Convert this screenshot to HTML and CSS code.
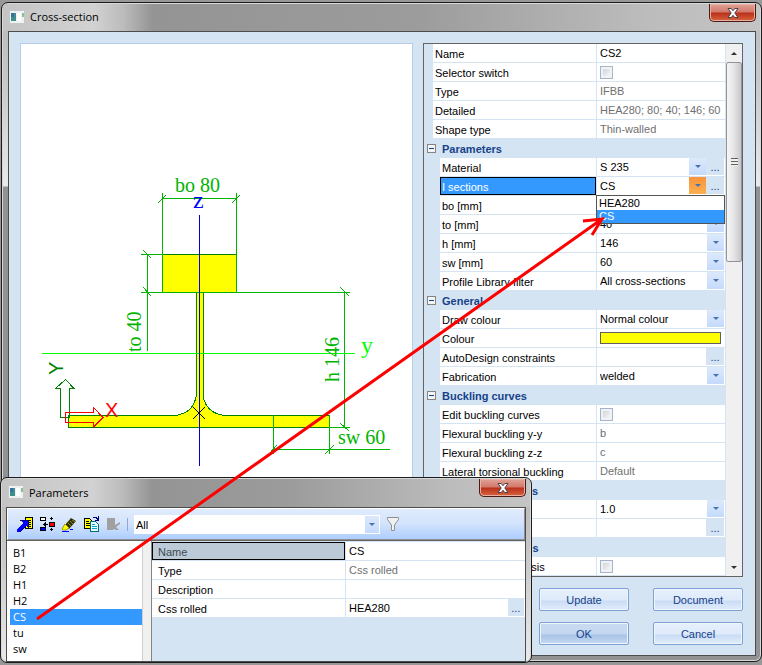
FILE: index.html
```html
<!DOCTYPE html>
<html lang="en">
<head>
    <meta charset="UTF-8">
    <meta name="viewport" content="width=device-width, initial-scale=1.0">
    <title>Cross-section</title>
    <link rel="stylesheet" href="styles.css">
</head>
<body>

    <main class="window main-window">
        <header class="title-bar">
            <svg class="app-icon" viewBox="0 0 16 14" width="16" height="14">
                <rect x="0.5" y="0.5" width="15" height="13" fill="#eef2f2" stroke="#c4c8c8"/>
                <rect x="2" y="3" width="5" height="8" fill="#3f8f8a"/>
                <rect x="2" y="3" width="3" height="4" fill="#3a6ea5"/>
                <rect x="8" y="3" width="4" height="8" fill="#fff"/>
                <rect x="13" y="3" width="2" height="4" fill="#8cc08c"/>
            </svg>
            <h1>Cross-section</h1>
            <button class="close" type="button" aria-label="Close">
                <svg viewBox="0 0 12 10" width="12" height="10"><path d="M1 .5h3.2L6 2.700 7.800.5H11L7.800 5 11 9.500H7.800L6 7.300 4.200 9.500H1L4.200 5z" fill="#fff" stroke="#4c3f4a"/></svg>
            </button>
        </header>

        <div class="client">
            <section class="preview">
                <svg viewBox="21 44 391 532">
                    <!-- steel profile -->
                    <g fill="#ffff00" stroke="#008000" shape-rendering="crispEdges">
                        <rect x="162.500" y="254.500" width="74" height="38"/>
                        <path d="M68.500 427.500V415.500H175C187 414 195 408 196.500 394V292.500H203.500V398C206 408 214 414 224 415.500H329.500V427.500z"/>
                    </g>
                    <!-- dimension lines -->
                    <g fill="none" stroke="#00b400" shape-rendering="crispEdges">
                        <path d="M162.500 193V292M236.500 193V292M162 198.500H237M158 203l8-8M232 203l8-8"/>
                        <path d="M141 254.500H163M141 292.500H350M147.500 254V351M143 250l8 8M143 287l8 9"/>
                        <path d="M344.500 292V428M329 427.500H350M340 287l9 9M340 423l9 8"/>
                        <path d="M273.500 415V454M329.500 415V454M273 449.500H390M269 454l8-9M325 454l9-9"/>
                        <path d="M42 353.500H355" stroke="#00ff00"/>
                    </g>
                    <!-- axes -->
                    <path d="M199.500 215V466" stroke="#0000d0" shape-rendering="crispEdges"/>
                    <path d="M193 407l12 12M205 407l-12 12" stroke="#000"/>
                    <path d="M60.500 417.500V388.500H55.500L65.500 379.500L74 388.500H69.500V417.500z" fill="none" stroke="#008000" shape-rendering="crispEdges"/>
                    <path d="M65.500 412.500H93.500V407.500L103 417.500L93.500 427V422.500H65.500z" fill="none" stroke="#ff0000" shape-rendering="crispEdges"/>
                    <g class="dim" fill="#00b400">
                        <text x="175" y="192">bo 80</text>
                        <text transform="translate(141 352) rotate(-90)">to 40</text>
                        <text transform="translate(339 382) rotate(-90)">h 146</text>
                        <text x="338" y="444">sw 60</text>
                    </g>
                    <text class="axis" x="193" y="208" fill="#0000ff">z</text>
                    <text class="axis" x="361" y="353" fill="#00ff00">y</text>
                    <text class="origin" x="105" y="417" fill="#ff0000">X</text>
                    <text class="origin" transform="translate(63 375) rotate(-90)" fill="#008000">Y</text>
                </svg>
            </section>

            <div class="side">
                <section class="properties">
                    <table class="grid">
                        <tbody class="top">
                            <tr><th><label for="name">Name</label></th><td><input type="text" id="name" value="CS2"></td></tr>
                            <tr><th><label for="selector">Selector switch</label></th><td><input type="checkbox" id="selector"></td></tr>
                            <tr><th>Type</th><td class="readonly">IFBB</td></tr>
                            <tr><th>Detailed</th><td class="readonly">HEA280; 80; 40; 146; 60</td></tr>
                            <tr><th>Shape type</th><td class="readonly">Thin-walled</td></tr>
                        </tbody>
                        <tbody>
                            <tr class="group"><th colspan="2"><div class="group-title"><button type="button" class="toggle" aria-label="Collapse Parameters"></button>Parameters</div></th></tr>
                            <tr><th><label for="material">Material</label></th><td><div class="field"><select id="material"><option>S 235</option></select><span class="arrow"></span><button type="button" class="more">...</button></div></td></tr>
                            <tr><th class="selected"><label for="isections">I sections</label></th>
                                <td class="open">
                                    <div class="field"><select id="isections"><option>CS</option><option>HEA280</option></select><span class="arrow hot"></span><button type="button" class="more">...</button></div>
                                    <ul class="options" role="listbox">
                                        <li role="option">HEA280</li>
                                        <li role="option" class="current" aria-selected="true">CS</li>
                                    </ul>
                                </td></tr>
                            <tr><th><label for="bo">bo [mm]</label></th><td><div class="field"><select id="bo"><option>80</option></select><span class="arrow"></span></div></td></tr>
                            <tr><th><label for="to">to [mm]</label></th><td><div class="field"><select id="to"><option>40</option></select><span class="arrow"></span></div></td></tr>
                            <tr><th><label for="h">h [mm]</label></th><td><div class="field"><select id="h"><option>146</option></select><span class="arrow"></span></div></td></tr>
                            <tr><th><label for="sw">sw [mm]</label></th><td><div class="field"><select id="sw"><option>60</option></select><span class="arrow"></span></div></td></tr>
                            <tr><th><label for="filter">Profile Library filter</label></th><td><div class="field"><select id="filter"><option>All cross-sections</option></select><span class="arrow"></span></div></td></tr>
                        </tbody>
                        <tbody>
                            <tr class="group"><th colspan="2"><div class="group-title"><button type="button" class="toggle" aria-label="Collapse General"></button>General</div></th></tr>
                            <tr><th><label for="draw">Draw colour</label></th><td><div class="field"><select id="draw"><option>Normal colour</option></select><span class="arrow"></span></div></td></tr>
                            <tr><th>Colour</th><td><button type="button" class="swatch" aria-label="Colour"></button></td></tr>
                            <tr><th>AutoDesign constraints</th><td><div class="field end"><button type="button" class="more">...</button></div></td></tr>
                            <tr><th><label for="fabrication">Fabrication</label></th><td><div class="field"><select id="fabrication"><option>welded</option></select><span class="arrow"></span></div></td></tr>
                        </tbody>
                        <tbody>
                            <tr class="group"><th colspan="2"><div class="group-title"><button type="button" class="toggle" aria-label="Collapse Buckling curves"></button>Buckling curves</div></th></tr>
                            <tr><th><label for="edit">Edit buckling curves</label></th><td><input type="checkbox" id="edit"></td></tr>
                            <tr><th>Flexural buckling y-y</th><td class="readonly">b</td></tr>
                            <tr><th>Flexural buckling z-z</th><td class="readonly">c</td></tr>
                            <tr><th>Lateral torsional buckling</th><td class="readonly">Default</td></tr>
                        </tbody>
                        <tbody>
                            <tr class="group"><th colspan="2"><div class="group-title"><button type="button" class="toggle" aria-label="Collapse Stress parameters"></button>Stress parameters</div></th></tr>
                            <tr><th><label for="factor">Factor</label></th><td><div class="field"><select id="factor"><option>1.0</option></select><span class="arrow"></span></div></td></tr>
                            <tr><th>Details</th><td><div class="field end"><button type="button" class="more">...</button></div></td></tr>
                        </tbody>
                        <tbody>
                            <tr class="group"><th colspan="2"><div class="group-title"><button type="button" class="toggle" aria-label="Collapse Section properties"></button>Section properties</div></th></tr>
                            <tr><th><label for="fem">For 2D FEM analysis</label></th><td><input type="checkbox" id="fem"></td></tr>
                        </tbody>
                    </table>
                    <div class="scrollbar">
                        <button type="button" class="scroll-up" aria-label="Scroll up"></button>
                        <div class="thumb"><span></span></div>
                        <button type="button" class="scroll-down" aria-label="Scroll down"></button>
                    </div>
                </section>

                <div class="actions">
                    <button type="button">Update</button>
                    <button type="button">Document</button>
                    <button type="button" class="default">OK</button>
                    <button type="button">Cancel</button>
                </div>
            </div>
        </div>
    </main>

    <section class="window params-window">
        <header class="title-bar">
            <svg class="app-icon" viewBox="0 0 16 14" width="16" height="14">
                <rect x="0.5" y="0.5" width="15" height="13" fill="#eef2f2" stroke="#c4c8c8"/>
                <rect x="2" y="3" width="5" height="8" fill="#3f8f8a"/>
                <rect x="2" y="3" width="3" height="4" fill="#3a6ea5"/>
                <rect x="8" y="3" width="4" height="8" fill="#fff"/>
                <rect x="13" y="3" width="2" height="4" fill="#8cc08c"/>
            </svg>
            <h2>Parameters</h2>
            <button class="close" type="button" aria-label="Close">
                <svg viewBox="0 0 12 10" width="12" height="10"><path d="M1 .5h3.2L6 2.700 7.800.5H11L7.800 5 11 9.500H7.800L6 7.300 4.200 9.500H1L4.200 5z" fill="#fff" stroke="#4c3f4a"/></svg>
            </button>
        </header>

        <div class="params-client">
            <div class="toolbar">
                <button type="button" aria-label="New">
                    <svg viewBox="0 0 16 16" width="16" height="16" shape-rendering="crispEdges">
                        <rect x="8.500" y="1.500" width="7" height="11" fill="#ffff00" stroke="#000"/>
                        <path d="M11 4.500h3M11 6.500h3M11 8.500h3M11 10.500h3" stroke="#000"/>
                        <path d="M3 4h8v8l-2-2-6 6H0v-3l6-6z" fill="#0000ff"/>
                        <path d="M3 4.500h8M11 4v8M9 10l-6 6" stroke="#000080" fill="none"/>
                    </svg>
                </button>
                <button type="button" aria-label="Insert">
                    <svg viewBox="0 0 16 16" width="16" height="16" shape-rendering="crispEdges">
                        <rect x="1.500" y="1.500" width="5" height="3" fill="#fff" stroke="#000"/>
                        <rect x="1.500" y="11.500" width="5" height="3" fill="#0000ff" stroke="#000"/>
                        <rect x="10.500" y="6.500" width="5" height="4" fill="#ff0000" stroke="#000"/>
                        <path d="M4 8.500h5M5 7v3M6 6v5M11 2.500h3M12.500 1v3M11 13.500h3M12.500 12v3" stroke="#000"/>
                    </svg>
                </button>
                <button type="button" aria-label="Edit">
                    <svg viewBox="0 0 16 16" width="16" height="16">
                        <path d="M10 2l5 3-7 8-4-4z" fill="#303000"/>
                        <path d="M9 5l3 3M7 7l3 3M11 4l3 2" stroke="#8c8c20"/>
                        <path d="M4 8l4 4-3 2H2l-1-1z" fill="#ffff00" stroke="#a0a000"/>
                        <path d="M1 15.500h7M9 13.500h3" stroke="#0000ff"/>
                    </svg>
                </button>
                <button type="button" aria-label="Copy">
                    <svg viewBox="0 0 16 16" width="16" height="16" shape-rendering="crispEdges">
                        <path d="M1.500 2.500h5l3 3v7h-8z" fill="#ffff00" stroke="#000"/>
                        <path d="M3 5.500h3M3 7.500h4M3 9.500h4" stroke="#000"/>
                        <path d="M7.500 5.500h5l3 3v7h-8z" fill="#e8ffff" stroke="#007070"/>
                        <path d="M9 8.500h3M9 10.500h5M9 12.500h5" stroke="#00a0d0"/>
                        <path d="M10 1.500h3l2 2M15.500 0v4h-4" fill="none" stroke="#000080"/>
                    </svg>
                </button>
                <button type="button" aria-label="Delete" disabled>
                    <svg viewBox="0 0 16 16" width="16" height="16">
                        <path d="M2 2h8v7l5-3v2l-4 3 3 3h-3l-2-1-1 1H2z" fill="#a0a0a0"/>
                    </svg>
                </button>
                <span class="separator"></span>
                <div class="field all">
                    <select aria-label="Show"><option>All</option></select><span class="arrow"></span>
                </div>
                <button type="button" class="funnel" aria-label="Filter">
                    <svg viewBox="0 0 14 16" width="14" height="16"><path d="M1.500 1.500h11v2L8.500 9v5.500h-3V9l-4-5.500z" fill="#eef0f2" stroke="#909090"/></svg>
                </button>
            </div>

            <div class="params-body">
                <ul class="items">
                    <li>B1</li>
                    <li>B2</li>
                    <li>H1</li>
                    <li>H2</li>
                    <li class="current">CS</li>
                    <li>tu</li>
                    <li>sw</li>
                </ul>
                <div class="item-detail">
                    <table class="grid">
                        <tbody>
                            <tr><th class="focused"><label for="item-name">Name</label></th><td><input type="text" id="item-name" value="CS"></td></tr>
                            <tr><th>Type</th><td class="readonly">Css rolled</td></tr>
                            <tr><th><label for="item-desc">Description</label></th><td><input type="text" id="item-desc"></td></tr>
                            <tr><th><label for="item-css">Css rolled</label></th><td><div class="field"><input type="text" id="item-css" value="HEA280"><button type="button" class="more">...</button></div></td></tr>
                        </tbody>
                    </table>
                </div>
            </div>
        </div>
    </section>

    <!-- arrow from the list item to the drop-down option -->
    <svg class="callout" viewBox="0 0 762 665" width="762" height="665">
        <path d="M37 619L602 219M583 221L602 219L592 235" fill="none" stroke="#ff0000" stroke-width="3"/>
    </svg>

</body>
</html>
```

FILE: styles.css
```css
* {
    box-sizing: border-box;
}
body {
    position: relative;
    margin: 0;
    padding: 2px 0 2px 1px;
    min-height: 100vh;
    background-color: #989898;
    font-family: "Liberation Sans", Arial, sans-serif;
    font-size: 11px;
    color: #000;
}
button, input, select {
    font: inherit;
    color: inherit;
    margin: 0;
    padding: 0;
    border: none;
    border-radius: 0;
    background: none;
}
ul {
    list-style: none;
    margin: 0;
    padding: 0;
}

/* Windows */
.window {
    border: 1px solid #1c1c1c;
    border-radius: 7px;
    background: linear-gradient(#b8b8b8, #c8c8c8 80px, #eaeaea 183px, #929292 184px);
    box-shadow: inset 0 0 0 1px #d8d8d8;
}
.main-window {
    padding: 0 5px 5px 6px;
}
.title-bar {
    display: flex;
    align-items: center;
    height: 27px;
    margin: 1px -4px 0 -5px;
    padding: 0 4px 2px 6px;
    border-radius: 6px 6px 0 0;
    background: linear-gradient(90deg, #c4c4c4, #d2d2d2 90px, #bcbcbc 120px, #949494 150px, #9c9c9c 55%, #bcbcbc 85%, #c4c4c4);
}
.title-bar h1, .title-bar h2 {
    flex: 1;
    margin: 0 0 0 5px;
    font-family: "Open Sans", sans-serif;
    font-size: 11px;
    font-weight: normal;
}
.close {
    display: flex;
    align-items: center;
    justify-content: center;
    align-self: flex-start;
    width: 47px;
    height: 18px;
    border: 1px solid #4a1a14;
    border-top: none;
    border-radius: 0 0 5px 5px;
    background: linear-gradient(#e0a498, #d2796a 8px, #b8301a 9px, #d8643c);
    box-shadow: inset 0 0 0 1px #e8b0a4;
}
.client {
    display: flex;
    align-items: stretch;
    gap: 10px;
    padding: 11px 12px 10px 11px;
    border: 1px solid #4c4c4c;
    background-color: #d5e4f2;
}
.preview {
    flex: 1;
    min-width: 0;
    border: 1px solid #b5cdea;
    background-color: #fff;
}
.preview svg {
    display: block;
    width: 100%;
}
.preview text {
    font-family: "Liberation Serif", serif;
}
.dim text {
    font-size: 20px;
}
.preview .axis {
    font-size: 24px;
}
.preview .origin {
    font-family: "Liberation Sans", sans-serif;
    font-size: 20px;
}

/* Property grid */
.side {
    flex: 0 0 320px;
}
.properties {
    display: flex;
    border: 1px solid #646464;
    background-color: #d5e4f2;
}
.grid {
    flex: 1;
    border-collapse: separate;
    border-spacing: 0;
    table-layout: fixed;
    width: 100%;
}
.grid tr {
    height: 19px;
}
.grid th, .grid td {
    height: 19px;
    padding: 0;
    border-bottom: 1px solid #d5e4f2;
    background-color: #fff;
    font-weight: normal;
    text-align: left;
    white-space: nowrap;
    line-height: 18px;
}
.grid th {
    width: 172px;
    padding: 2px 0 0 2px;
    border-left: 16px solid #d5e4f2;
    line-height: 16px;
}
.top th {
    border-left-width: 9px;
}
.grid td {
    position: relative;
    padding: 0 1px 0 3px;
    border-left: 1px solid #d5e4f2;
}
.grid .readonly {
    color: #707070;
}
.grid .group th {
    border: none;
    padding: 0 0 0 3px;
    background-color: #d5e4f2;
    color: #15428b;
    font-weight: bold;
}
.group-title {
    display: flex;
    align-items: center;
    gap: 6px;
}
.toggle {
    display: flex;
    align-items: center;
    justify-content: center;
    width: 9px;
    height: 9px;
    border: 1px solid #848484;
    background-color: #f4f4f4;
}
.toggle::before {
    content: "";
    width: 5px;
    height: 1px;
    background-color: #15428b;
}
.grid .selected {
    background-color: #3399ff;
    box-shadow: inset 0 0 0 1px #000;
    color: #fff;
}
.grid input[type="text"] {
    display: block;
    width: 100%;
    height: 18px;
    outline: none;
}
.grid input[type="checkbox"] {
    appearance: none;
    display: block;
    width: 13px;
    height: 13px;
    border: 1px solid #a4b4cc;
    background: linear-gradient(135deg, #c8ccd4, #fff);
    box-shadow: inset 0 0 0 2px #f0f2f4;
}
.field {
    display: flex;
    height: 18px;
}
.field.end {
    justify-content: flex-end;
}
.field select {
    appearance: none;
    flex: 1;
    min-width: 0;
    outline: none;
}
.arrow {
    display: flex;
    align-items: center;
    justify-content: center;
    width: 17px;
    margin-bottom: 1px;
    background: linear-gradient(#dce9fb, #c4dafc);
}
.arrow::before {
    content: "";
    border: 3px solid transparent;
    border-top-color: #4a72b0;
    border-bottom: none;
}
.arrow.hot {
    background: linear-gradient(#f8943c, #fcb050);
}
.more {
    width: 18px;
    margin-bottom: 1px;
    background-color: #d5e4f2;
    color: #15428b;
    line-height: 16px;
}
.options {
    position: absolute;
    z-index: 1;
    top: 100%;
    left: -1px;
    right: 0;
    padding-top: 1px;
    border: 1px solid #545454;
    background-color: #fff;
    line-height: 13px;
}
.options li {
    padding-left: 2px;
}
.options .current, .items .current {
    background-color: #3399ff;
    color: #fff;
}
.swatch {
    display: block;
    width: 121px;
    height: 12px;
    border: 1px solid #606060;
    background-color: #ffff00;
}
.scrollbar {
    display: flex;
    flex-direction: column;
    width: 17px;
    border-left: 1px solid #d5e4f2;
    background-color: #f0f0f0;
}
.scroll-up, .scroll-down {
    display: flex;
    align-items: center;
    justify-content: center;
    height: 18px;
}
.scroll-up::before, .scroll-down::before {
    content: "";
    border: 3px solid transparent;
}
.scroll-up::before {
    border-bottom-color: #303030;
    border-top: none;
}
.scroll-down {
    margin-top: auto;
}
.scroll-down::before {
    border-top-color: #303030;
    border-bottom: none;
}
.thumb {
    display: flex;
    align-items: center;
    justify-content: center;
    height: 200px;
    border: 1px solid #949494;
    border-radius: 2px;
    background: linear-gradient(90deg, #f6f6f6, #e4e4e6 50%, #c8c8cc);
}
.thumb span {
    width: 7px;
    height: 8px;
    background: repeating-linear-gradient(#606060 0 1px, #f0f0f0 1px 3px);
}

/* Dialog buttons */
.actions {
    display: grid;
    grid-template-columns: 90px 90px;
    gap: 11px 24px;
    justify-content: end;
    margin-top: 11px;
}
.actions button {
    height: 23px;
    border: 1px solid #7da2d3;
    border-radius: 2px;
    background: linear-gradient(#e6f0fc, #dfeafa 11px, #c9dcf5 12px, #e2edfb);
    box-shadow: inset 0 0 0 1px #eef5fd;
    color: #15428b;
}
.actions .default {
    background: linear-gradient(#c9dbf1, #c3d7f0 11px, #a8c3e6 12px, #c6daf3);
}

/* Parameters window */
.params-window {
    position: absolute;
    left: 0;
    bottom: 2px;
    width: 532px;
    max-width: 100%;
    padding: 0 5px 0 5px;
}
.params-window .title-bar {
    height: 28px;
    margin: 1px -4px 0 -4px;
}
.params-client {
    border: 1px solid #4c4c4c;
    background-color: #d5e4f2;
}
.toolbar {
    display: flex;
    align-items: center;
    height: 32px;
    padding-left: 9px;
    border: 1px solid #fff;
    border-right-color: #909090;
    border-bottom-color: #909090;
    background: linear-gradient(#e0ecfd, #d4e4fc 14px, #aeceff);
}
.toolbar button {
    display: flex;
    margin-right: 6px;
}
.separator {
    width: 1px;
    height: 13px;
    margin-right: 6px;
    background-color: #8aa8d8;
}
.toolbar .all {
    width: 246px;
    height: 19px;
    padding: 1px 1px 0 2px;
    background-color: #fff;
}
.toolbar .arrow {
    width: 14px;
}
.toolbar .funnel {
    margin-left: 6px;
}
.params-body {
    display: flex;
    height: 121px;
    border-top: 1px solid #646464;
}
.items {
    width: 136px;
    margin-right: 8px;
    padding: 4px 0 0 3px;
    border-right: 1px solid #d0d0d0;
    background-color: #fff;
    box-shadow: 8px 0 0 #f0f0f0;
    font-family: "Open Sans", sans-serif;
    line-height: 16px;
}
.items li {
    padding-left: 3px;
}
.item-detail {
    flex: 1;
    padding-top: 1px;
    border-left: 1px solid #848484;
}
.item-detail .grid th {
    width: 193px;
    padding-left: 6px;
    border-left: none;
}
.item-detail .focused {
    background-color: #bccad8;
    box-shadow: inset 0 0 0 1px #000;
    color: #404850;
}

.callout {
    position: absolute;
    z-index: 2;
    top: 0;
    left: 0;
    pointer-events: none;
}
```
